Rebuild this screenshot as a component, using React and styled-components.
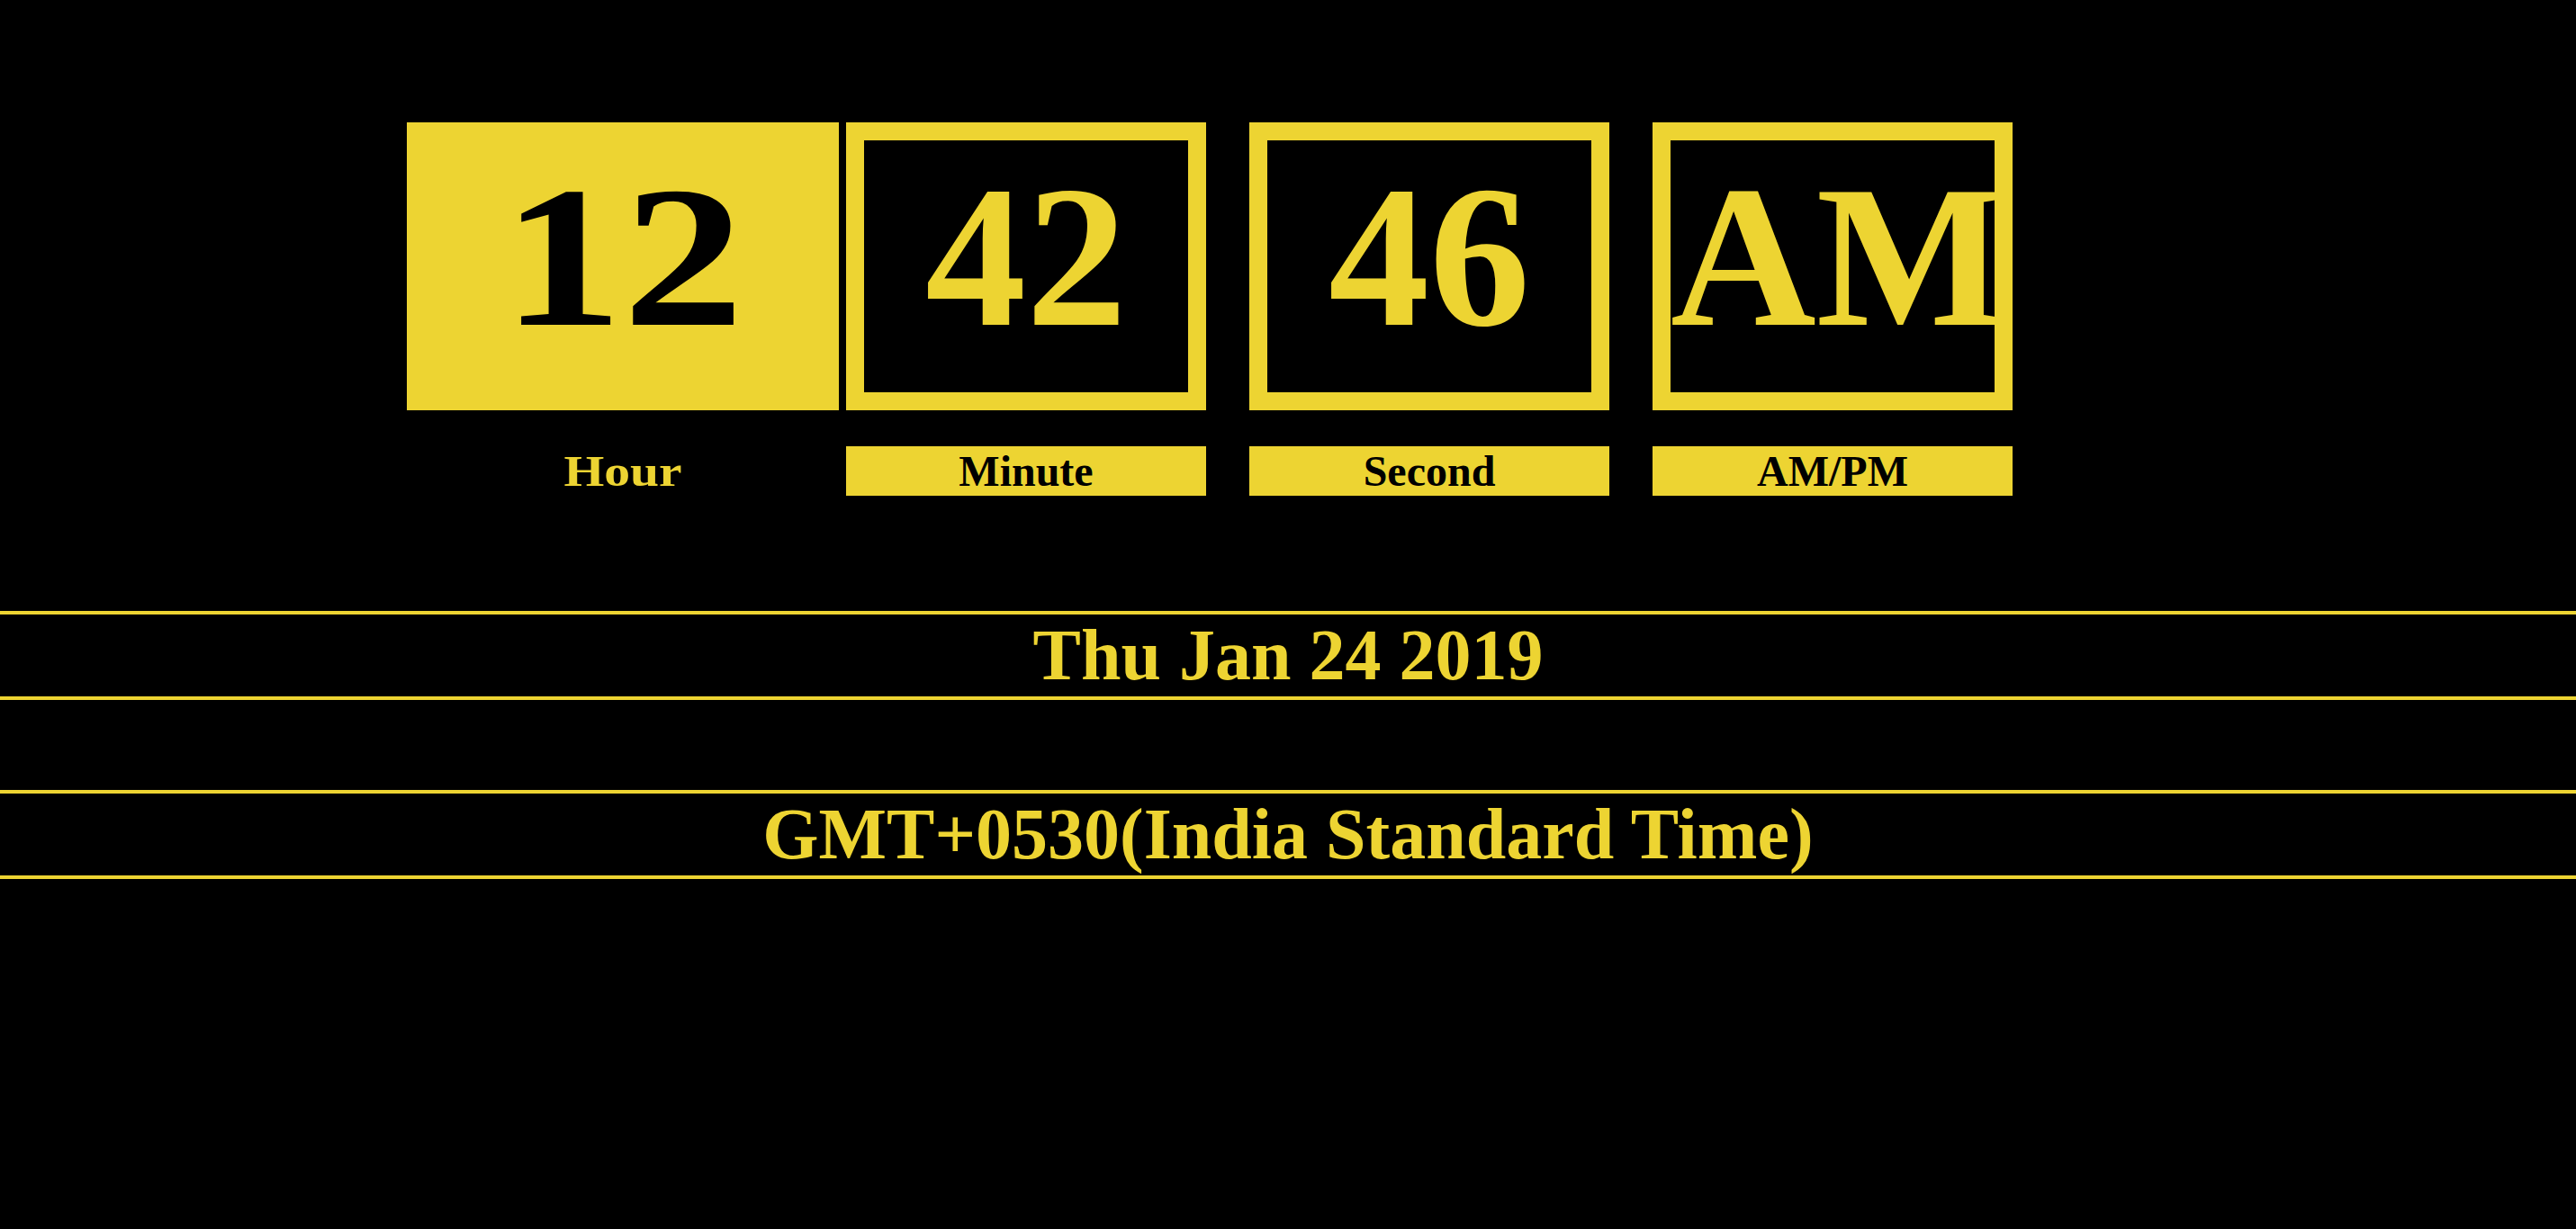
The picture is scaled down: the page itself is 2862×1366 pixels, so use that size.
import React from 'react';
import styled, { createGlobalStyle } from 'styled-components';

const yellow = '#edd432';

const GlobalStyle = createGlobalStyle`
  html, body {
    margin: 0;
    padding: 0;
    background: #000;
  }
  body {
    font-family: "Liberation Serif", "Times New Roman", serif;
    font-weight: bold;
    color: ${yellow};
  }
`;

const Page = styled.div`
  min-height: 1366px;
  padding-top: 136px;
  box-sizing: border-box;
`;

const Clock = styled.div`
  display: flex;
  gap: 48px;
  padding-left: 492px;
`;

const Column = styled.div`
  width: 400px;
  transform: ${p => (p.active ? 'scaleX(1.2)' : 'none')};
`;

const Face = styled.div`
  box-sizing: border-box;
  height: 320px;
  border: 20px solid ${yellow};
  background: ${p => (p.active ? yellow : '#000')};
  color: ${p => (p.active ? '#000' : yellow)};
  font-size: 224px;
  text-align: center;
  overflow: hidden;
  white-space: nowrap;
`;

const Label = styled.div`
  margin-top: 40px;
  font-size: 48px;
  text-align: center;
  background: ${p => (p.active ? 'transparent' : yellow)};
  color: ${p => (p.active ? yellow : '#000')};
`;

const Banner = styled.div`
  margin-top: ${p => p.gap}px;
  border-top: 4px solid ${yellow};
  border-bottom: 4px solid ${yellow};
  font-size: 80px;
  text-align: center;
`;

const units = [
  { value: '12', label: 'Hour', active: true },
  { value: '42', label: 'Minute' },
  { value: '46', label: 'Second' },
  { value: 'AM', label: 'AM/PM' },
];

export default function App() {
  return (
    <>
      <GlobalStyle />
      <Page>
        <Clock>
          {units.map(u => (
            <Column key={u.label} active={u.active}>
              <Face active={u.active}>{u.value}</Face>
              <Label active={u.active}>{u.label}</Label>
            </Column>
          ))}
        </Clock>
        <Banner gap={128}>Thu Jan 24 2019</Banner>
        <Banner gap={100}>GMT+0530(India Standard Time)</Banner>
      </Page>
    </>
  );
}
